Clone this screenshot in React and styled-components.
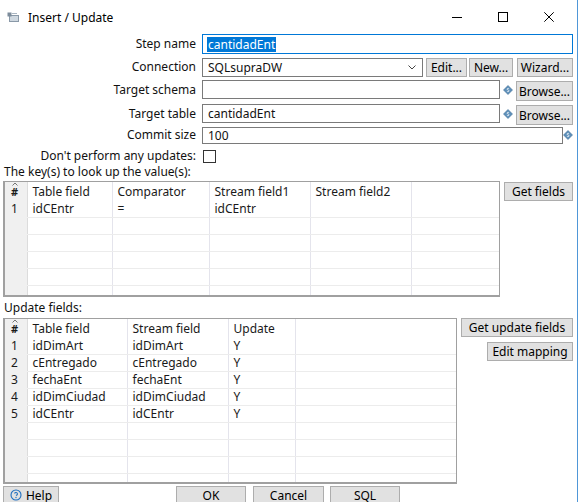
import React from "react";
import styled, { createGlobalStyle } from "styled-components";

const GlobalStyle = createGlobalStyle`
  html, body {
    margin: 0;
    padding: 0;
    background: #fff;
  }
  body {
    font-family: "Noto Sans", "Open Sans", sans-serif;
    font-size: 12px;
    color: #111;
  }
  #root {
    width: 582px;
    height: 502px;
    overflow: hidden;
  }
`;

const keyCols = [22, 85, 97, 101, 101];
const keyHead = ["Table field", "Comparator", "Stream field1", "Stream field2"];
const keyRows = [["idCEntr", "=", "idCEntr", ""]];

const updCols = [22, 100, 101, 67];
const updHead = ["Table field", "Stream field", "Update"];
const updRows = [
  ["idDimArt", "idDimArt", "Y"],
  ["cEntregado", "cEntregado", "Y"],
  ["fechaEnt", "fechaEnt", "Y"],
  ["idDimCiudad", "idDimCiudad", "Y"],
  ["idCEntr", "idCEntr", "Y"],
];

const VarIcon = () => (
  <svg width="10" height="10" viewBox="0 0 10 10">
    <path d="M5 0.5 L9.5 5 L5 9.5 L0.5 5 Z" fill="#5d8fb9" stroke="#3f6f99" strokeWidth="0.6" />
    <path
      d="M6.1 3.7 C5.7 3.2 4.1 3.2 4.1 4.2 C4.1 5.1 6 4.8 6 5.8 C6 6.9 4.3 6.8 3.9 6.3"
      stroke="#fff"
      strokeWidth="0.8"
      fill="none"
    />
  </svg>
);

const DataGrid = ({ cols, head, rows, total, height }) => {
  const lines = [];
  for (let i = 0; i < total; i++) lines.push(rows[i] || null);
  return (
    <GridBox $h={height}>
      <Table>
        <colgroup>
          {cols.map((w, i) => (
            <Col key={i} $w={w} />
          ))}
          <col />
        </colgroup>
        <thead>
          <tr>
            <NumHead>
              <SortMark width="6" height="4" viewBox="0 0 6 4">
                <path d="M0.5 3.5 L3 1 L5.5 3.5" stroke="#666" strokeWidth="0.9" fill="none" />
              </SortMark>
              #
            </NumHead>
            {head.map((h) => (
              <Th key={h}>{h}</Th>
            ))}
            <Th $last />
          </tr>
        </thead>
        <tbody>
          {lines.map((r, i) => (
            <tr key={i}>
              <NumCell>{r ? i + 1 : ""}</NumCell>
              {head.map((_, j) => (
                <Td key={j}>{r ? r[j] : ""}</Td>
              ))}
              <Td $last />
            </tr>
          ))}
        </tbody>
      </Table>
    </GridBox>
  );
};

export default function App() {
  return (
    <>
      <GlobalStyle />
      <Window>
        <TitleBar>
          <svg width="13" height="12" viewBox="0 0 13 12">
            <rect x="2.5" y="4.5" width="9" height="6" fill="#cfd8e0" stroke="#8a99a8" />
            <rect x="0.5" y="1.5" width="4" height="4" fill="#7d8c9b" />
            <path d="M5 2.5 H10" stroke="#aab6c2" strokeWidth="1" />
          </svg>
          <Title>Insert / Update</Title>
          <Controls>
            <Caption>
              <svg width="10" height="10" viewBox="0 0 10 10">
                <path d="M0 5.5 H10" stroke="#000" strokeWidth="1" />
              </svg>
            </Caption>
            <Caption>
              <svg width="10" height="10" viewBox="0 0 10 10">
                <rect x="0.5" y="0.5" width="9" height="9" stroke="#000" strokeWidth="1" fill="none" />
              </svg>
            </Caption>
            <Caption>
              <svg width="10" height="10" viewBox="0 0 10 10">
                <path d="M0.3 0.3 L9.7 9.7 M9.7 0.3 L0.3 9.7" stroke="#000" strokeWidth="1" />
              </svg>
            </Caption>
          </Controls>
        </TitleBar>

        <Body>
          <FormRow $top={0} $h={20}>
            <Label>Step name</Label>
            <Field>
              <TextBox $focus $h={20}>
                <Selected>cantidadEnt</Selected>
              </TextBox>
            </Field>
          </FormRow>

          <FormRow $top={3} $h={20}>
            <Label>Connection</Label>
            <Field>
              <TextBox $h={19} $grow>
                SQLsupraDW
                <Chevron width="8" height="5" viewBox="0 0 8 5">
                  <path d="M0.5 0.5 L4 4 L7.5 0.5" stroke="#444" strokeWidth="1" fill="none" />
                </Chevron>
              </TextBox>
              <Button $w={41} $h={19} $ml={3}>Edit...</Button>
              <Button $w={44} $h={19} $ml={2}>New...</Button>
              <Button $w={56} $h={19} $ml={4}>Wizard...</Button>
            </Field>
          </FormRow>

          <FormRow $top={3} $h={21}>
            <Label>Target schema</Label>
            <Field>
              <TextBox $h={19} $grow $self="flex-start" />
              <IconSlot $w={16}>
                <VarIcon />
              </IconSlot>
              <Button $w={57} $h={20} $self="flex-end">Browse...</Button>
            </Field>
          </FormRow>

          <FormRow $top={3} $h={21}>
            <Label>Target table</Label>
            <Field>
              <TextBox $h={19} $grow $self="flex-start">cantidadEnt</TextBox>
              <IconSlot $w={16}>
                <VarIcon />
              </IconSlot>
              <Button $w={57} $h={20} $self="flex-end">Browse...</Button>
            </Field>
          </FormRow>

          <FormRow $top={1} $h={17}>
            <Label>Commit size</Label>
            <Field>
              <TextBox $h={17} $grow>100</TextBox>
              <IconSlot $w={10}>
                <VarIcon />
              </IconSlot>
            </Field>
          </FormRow>

          <FormRow $top={4} $h={14}>
            <Label>Don't perform any updates:</Label>
            <Field>
              <CheckBox />
            </Field>
          </FormRow>

          <SectionLabel $top={3}>The key(s) to look up the value(s):</SectionLabel>
          <TableArea $top={1}>
            <DataGrid cols={keyCols} head={keyHead} rows={keyRows} total={6} height={116} />
            <SideButtons>
              <Button $w={69} $h={19} $mt={1}>Get fields</Button>
            </SideButtons>
          </TableArea>

          <SectionLabel $top={3}>Update fields:</SectionLabel>
          <TableArea $top={2}>
            <DataGrid cols={updCols} head={updHead} rows={updRows} total={9} height={166} />
            <SideButtons>
              <Button $w={112} $h={19}>Get update fields</Button>
              <Button $w={86} $h={19}>Edit mapping</Button>
            </SideButtons>
          </TableArea>

          <Footer>
            <Button $w={56} $h={17} $foot>
              <HelpIcon width="12" height="12" viewBox="0 0 24 24">
                <circle cx="12" cy="12" r="10" stroke="#1f6fc0" strokeWidth="2.2" fill="none" />
                <path d="M9.09 9a3 3 0 0 1 5.83 1c0 2-3 3-3 3" stroke="#1f6fc0" strokeWidth="2.2" fill="none" />
                <path d="M12 17h.01" stroke="#1f6fc0" strokeWidth="2.6" strokeLinecap="round" />
              </HelpIcon>
              Help
            </Button>
            <CenterGroup>
              <Button $w={70} $h={17} $foot>OK</Button>
              <Button $w={71} $h={17} $ml={7} $foot>Cancel</Button>
              <Button $w={70} $h={17} $ml={6} $foot>SQL</Button>
            </CenterGroup>
            <div />
          </Footer>
        </Body>
      </Window>
    </>
  );
}

const Window = styled.div`
  box-sizing: border-box;
  width: 578px;
  height: 502px;
  border-right: 1px solid #4f97d8;
  background: #fff;
  display: flex;
  flex-direction: column;
`;

const TitleBar = styled.div`
  height: 34px;
  flex: 0 0 34px;
  display: flex;
  align-items: center;
  padding-left: 7px;
`;

const Title = styled.span`
  margin-left: 8px;
  font-size: 12px;
  color: #000;
`;

const Controls = styled.div`
  margin-left: auto;
  margin-right: 5px;
  display: flex;
  height: 34px;
`;

const Caption = styled.div`
  width: 46px;
  display: flex;
  align-items: center;
  justify-content: center;
`;

const Body = styled.div`
  padding: 0 4px 0 3px;
  display: flex;
  flex-direction: column;
`;

const FormRow = styled.div`
  display: grid;
  grid-template-columns: 193px 1fr;
  column-gap: 6px;
  align-items: center;
  height: ${(p) => p.$h}px;
  margin-top: ${(p) => p.$top}px;
`;

const Label = styled.div`
  text-align: right;
  white-space: nowrap;
  padding-bottom: 2px;
`;

const Field = styled.div`
  display: flex;
  align-items: center;
  height: 100%;
`;

const TextBox = styled.div`
  box-sizing: border-box;
  height: ${(p) => p.$h}px;
  flex: ${(p) => (p.$grow || p.$focus ? "1 1 auto" : "0 0 auto")};
  align-self: ${(p) => p.$self || "center"};
  border: 1px solid ${(p) => (p.$focus ? "#0078d7" : "#7a7a7a")};
  background: #fff;
  display: flex;
  align-items: center;
  padding-left: 5px;
  padding-right: 6px;
  white-space: nowrap;
`;

const Selected = styled.span`
  background: #0078d7;
  color: #fff;
  line-height: 15px;
  padding: 0 1px;
  margin-left: -1px;
`;

const Chevron = styled.svg`
  margin-left: auto;
`;

const Button = styled.button`
  box-sizing: border-box;
  width: ${(p) => p.$w}px;
  height: ${(p) => p.$h}px;
  flex: 0 0 auto;
  margin-left: ${(p) => p.$ml || 0}px;
  margin-top: ${(p) => p.$mt || 0}px;
  align-self: ${(p) => p.$self || "auto"};
  padding: 0;
  background: #e1e1e1;
  border: 1px solid #adadad;
  border-bottom-width: ${(p) => (p.$foot ? 0 : 1)}px;
  border-radius: 0;
  font-family: inherit;
  font-size: 12px;
  color: #000;
  display: flex;
  align-items: center;
  justify-content: center;
  white-space: nowrap;
`;

const IconSlot = styled.div`
  width: ${(p) => p.$w}px;
  flex: 0 0 ${(p) => p.$w}px;
  display: flex;
  align-items: center;
  justify-content: center;
  padding-bottom: 1px;
`;

const CheckBox = styled.div`
  box-sizing: border-box;
  width: 13px;
  height: 13px;
  border: 1px solid #333;
  background: #fff;
  margin-left: 1px;
`;

const SectionLabel = styled.div`
  margin-top: ${(p) => p.$top}px;
  padding-left: 1px;
  line-height: 16px;
  height: 16px;
  white-space: nowrap;
`;

const TableArea = styled.div`
  margin-top: ${(p) => p.$top}px;
  display: flex;
  align-items: flex-start;
  gap: 4px;
`;

const GridBox = styled.div`
  box-sizing: border-box;
  flex: 1 1 auto;
  height: ${(p) => p.$h}px;
  overflow: hidden;
  border: 1px solid #a0a0a0;
  border-left-width: 2px;
  border-bottom-width: 2px;
  background: #fff;
`;

const Table = styled.table`
  width: 100%;
  table-layout: fixed;
  border-collapse: collapse;
  font-size: 12px;
  color: #1a1a1a;
`;

const Col = styled.col`
  width: ${(p) => p.$w}px;
`;

const Th = styled.th`
  height: 19px;
  padding: 0 0 0 5px;
  text-align: left;
  font-weight: normal;
  white-space: nowrap;
  overflow: hidden;
  border-right: ${(p) => (p.$last ? "none" : "1px solid #e4e4ec")};
`;

const NumHead = styled.th`
  position: relative;
  height: 19px;
  padding: 0 0 0 6px;
  background: #f0f0f0;
  font-weight: bold;
  font-size: 11px;
  text-align: left;
  vertical-align: middle;
  border-right: 1px solid #dcdcdc;
`;

const SortMark = styled.svg`
  position: absolute;
  left: 7px;
  top: 0;
`;

const Td = styled.td`
  height: 16px;
  padding: 0 0 0 5px;
  line-height: 16px;
  white-space: nowrap;
  overflow: hidden;
  border-bottom: 1px solid #ececec;
  border-right: ${(p) => (p.$last ? "none" : "1px solid #e4e4ec")};
`;

const NumCell = styled.td`
  height: 16px;
  padding: 0 0 0 6px;
  line-height: 16px;
  background: #f0f0f0;
  border-right: 1px solid #dcdcdc;
  border-bottom: 1px solid #f0f0f0;
`;

const SideButtons = styled.div`
  display: flex;
  flex-direction: column;
  align-items: flex-end;
  gap: 5px;
  flex: 0 0 auto;
  min-width: 69px;
`;

const Footer = styled.div`
  margin-top: 2px;
  display: grid;
  grid-template-columns: 1fr auto 1fr;
  align-items: start;
`;

const CenterGroup = styled.div`
  display: flex;
`;

const HelpIcon = styled.svg`
  margin-right: 4px;
`;
